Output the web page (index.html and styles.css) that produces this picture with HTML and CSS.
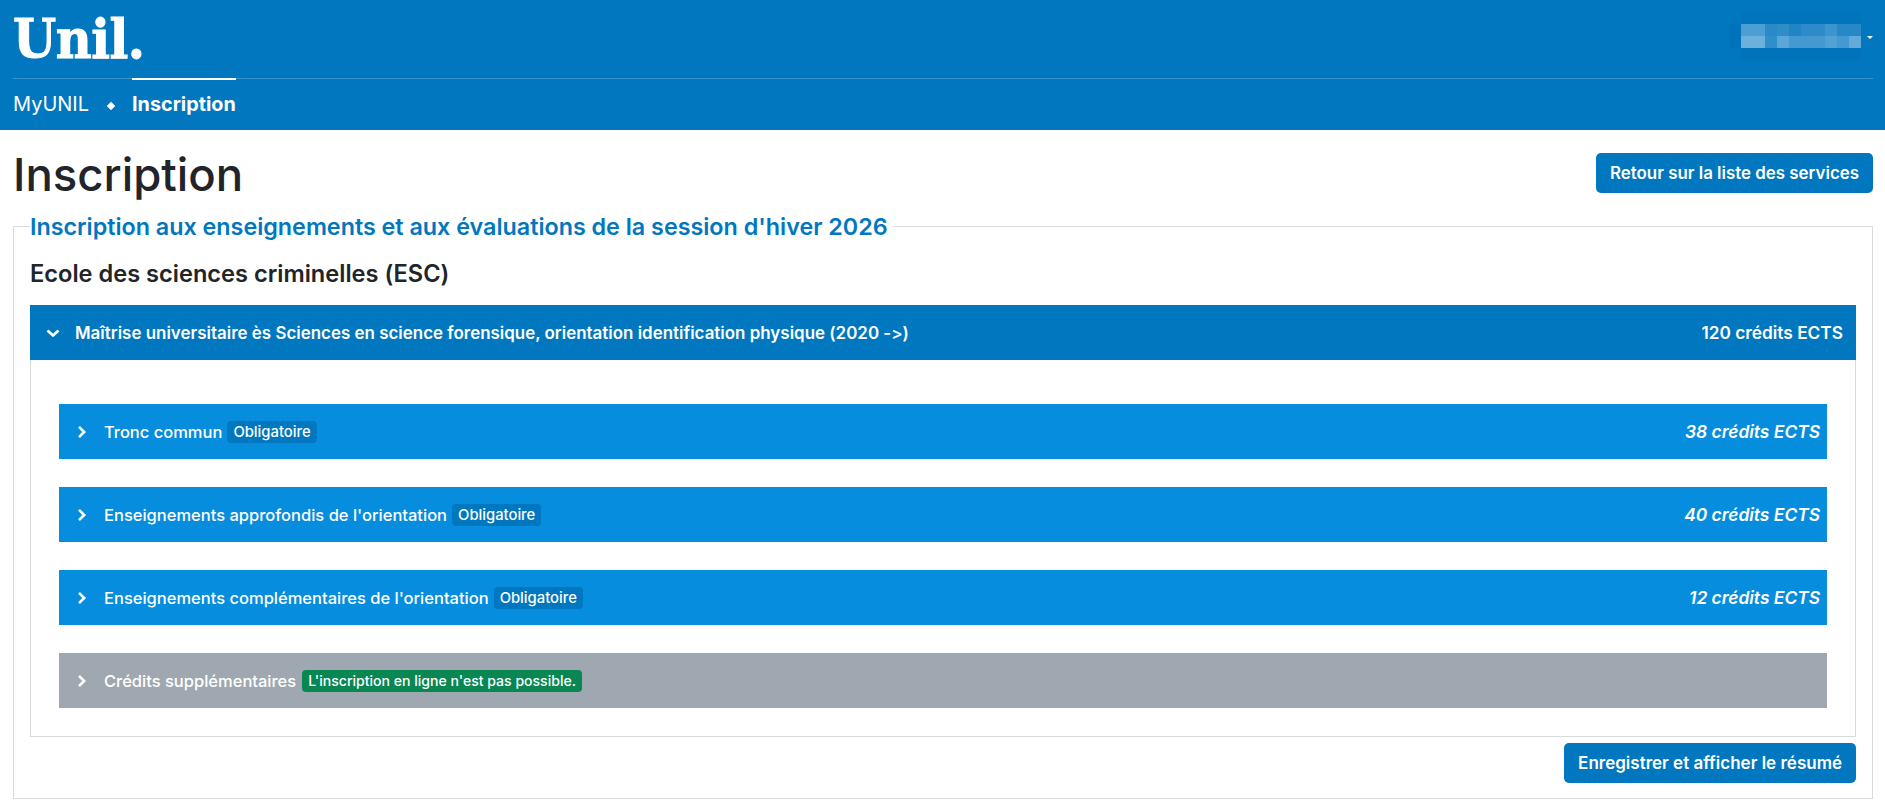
FILE: index.html
```html
<!DOCTYPE html>
<html lang="fr">
<head>
<meta charset="utf-8">
<title>Inscription</title>
<link rel="stylesheet" href="styles.css">
</head>
<body>
<header class="site-header">
  <div class="brand-row">
    <div class="logo">Unil.</div>
    <div class="user">
      <svg class="user-blur" width="132" height="48" viewBox="-1 0 11 4" shape-rendering="crispEdges">
        <rect x="0" y="0" width="10" height="1" fill="#0075bc"/>
        <rect x="-1" y="1" width="1" height="2" fill="#0073bb"/>
        <rect x="0" y="1" width="2" height="1" fill="#4c9fd2"/><rect x="2" y="1" width="1" height="1" fill="#2a8ac7"/><rect x="3" y="1" width="1" height="1" fill="#2f8dc8"/><rect x="4" y="1" width="1" height="1" fill="#1f85c4"/><rect x="5" y="1" width="2" height="1" fill="#2c8bc8"/><rect x="7" y="1" width="1" height="1" fill="#3c95cd"/><rect x="8" y="1" width="2" height="1" fill="#2688c6"/>
        <rect x="0" y="2" width="2" height="1" fill="#6cb0dc"/><rect x="2" y="2" width="1" height="1" fill="#2f8fca"/><rect x="3" y="2" width="1" height="1" fill="#5ca7d7"/><rect x="4" y="2" width="3" height="1" fill="#449ad0"/><rect x="7" y="2" width="1" height="1" fill="#50a2d5"/><rect x="8" y="2" width="1" height="1" fill="#449ad0"/><rect x="9" y="2" width="1" height="1" fill="#62abd9"/>
        <rect x="0" y="3" width="10" height="1" fill="#0073ba"/>
      </svg>
      <span class="caret"></span>
    </div>
  </div>
  <nav class="crumbs">
    <a class="crumb">MyUNIL</a>
    <span class="crumb-sep"></span>
    <a class="crumb crumb-active">Inscription</a>
  </nav>
</header>
<main class="page">
  <div class="title-row">
    <h1 class="page-title">Inscription</h1>
    <a class="btn btn-back">Retour sur la liste des services</a>
  </div>
  <fieldset class="session">
    <legend class="session-legend">Inscription aux enseignements et aux évaluations de la session d'hiver 2026</legend>
    <h2 class="school">Ecole des sciences criminelles (ESC)</h2>
    <section class="program">
      <div class="program-head">
        <svg class="chev" width="14" height="14" viewBox="0 0 14 14"><path d="M1.5 4.5L7 9.5l5.5-5" fill="none" stroke="#fff" stroke-width="2.6"/></svg>
        <span class="program-name">Maîtrise universitaire ès Sciences en science forensique, orientation identification physique (2020 -&gt;)</span>
        <span class="program-credits">120 crédits ECTS</span>
      </div>
      <div class="modules">
        <div class="module">
          <svg class="chev" width="14" height="14" viewBox="0 0 14 14"><path d="M4 1.8L9.2 7 4 12.2" fill="none" stroke="#fff" stroke-width="2.6"/></svg>
          <span class="module-name">Tronc commun</span><span class="badge">Obligatoire</span>
          <span class="module-credits">38 crédits ECTS</span>
        </div>
        <div class="module">
          <svg class="chev" width="14" height="14" viewBox="0 0 14 14"><path d="M4 1.8L9.2 7 4 12.2" fill="none" stroke="#fff" stroke-width="2.6"/></svg>
          <span class="module-name">Enseignements approfondis de l'orientation</span><span class="badge">Obligatoire</span>
          <span class="module-credits">40 crédits ECTS</span>
        </div>
        <div class="module">
          <svg class="chev" width="14" height="14" viewBox="0 0 14 14"><path d="M4 1.8L9.2 7 4 12.2" fill="none" stroke="#fff" stroke-width="2.6"/></svg>
          <span class="module-name">Enseignements complémentaires de l'orientation</span><span class="badge">Obligatoire</span>
          <span class="module-credits">12 crédits ECTS</span>
        </div>
        <div class="module module-off">
          <svg class="chev" width="14" height="14" viewBox="0 0 14 14"><path d="M4 1.8L9.2 7 4 12.2" fill="none" stroke="#fff" stroke-width="2.6"/></svg>
          <span class="module-name">Crédits supplémentaires</span><span class="badge badge-ok">L'inscription en ligne n'est pas possible.</span>
        </div>
      </div>
    </section>
    <div class="actions"><a class="btn btn-save">Enregistrer et afficher le résumé</a></div>
  </fieldset>
</main>
</body>
</html>
```
FILE: styles.css
```css
* { box-sizing: border-box; }
html, body { margin: 0; padding: 0; background: #fff; }
body { font-family: "Inter", "Liberation Sans", sans-serif; font-variant-ligatures: none; font-feature-settings: "calt" 0; color: #212529; height: 805px; overflow: hidden; }

.site-header { background: #0077be; height: 130px; padding: 0 12px 0 13px; color: #fff; }
.brand-row { height: 79px; border-bottom: 1px solid #3a94cd; display: flex; justify-content: space-between; }
.logo { font-family: "DejaVu Serif", serif; font-stretch: condensed; font-weight: 700; font-size: 55px; line-height: 78px; letter-spacing: -0.5px; -webkit-text-stroke: 1px #fff; }
.user { display: flex; align-items: flex-start; padding-top: 12px; }
.user-blur { display: block; margin-right: 6px; }
.caret { width: 0; height: 0; margin-top: 24px; border: 3px solid transparent; border-top-color: #fff; border-bottom: 0; }

.crumbs { display: flex; align-items: flex-start; font-size: 20px; line-height: 24px; }
.crumb { padding-top: 13px; display: block; }
.crumb-sep { width: 6px; height: 6px; background: #fff; transform: rotate(45deg); margin: 24px 18px 0 19px; }
.crumb-active { font-size: 19.8px; font-weight: 700; border-top: 2px solid #fff; margin-top: -1px; padding-top: 12px; }

.page { padding: 0 12px 0 13px; }
.title-row { display: flex; justify-content: space-between; align-items: flex-start; height: 82px; padding-top: 23px; }
.page-title { margin: 0; font-size: 45.5px; line-height: 44px; font-weight: 500; }
.btn { display: block; background: #0077be; color: #fff; font-weight: 600; line-height: 20px; padding: 10px 14px; border-radius: 5px; }
.btn-back { font-size: 16.9px; }
.btn-save { font-size: 17px; }

.session { margin: 0; padding: 0 16px; border: 1px solid #d9dadb; height: 587px; min-width: 0; }
.session-legend { margin: 0; padding: 2px 6px 0 0; color: #0077be; font-size: 23.3px; line-height: 26px; font-weight: 600; }
.school { margin: 0; padding-top: 20px; font-size: 23.6px; line-height: 28px; font-weight: 600; }
.program { margin-top: 17px; border: 1px solid #d9dadb; border-top: 0; height: 432px; }
.program-head { margin: 0 -1px; height: 55px; background: #0077be; color: #fff; display: flex; align-items: center; padding: 0 13px 0 16px; font-size: 16.95px; font-weight: 600; }
.program-name { margin-left: 15px; flex: 1; }
.program-credits { font-size: 17.3px; }
.modules { padding: 44px 28px 0; display: flex; flex-direction: column; gap: 28px; }
.module { height: 55px; background: #068ddd; color: #fff; display: flex; align-items: center; padding: 0 7px 0 16px; font-size: 16.5px; font-weight: 500; }
.module-off { background: #9fa8b0; }
.module-name { margin-left: 15px; }
.chev { flex: none; }
.badge { margin-left: 5px; background: #0077be; font-size: 14.8px; line-height: 22px; padding: 0 6px; border-radius: 4px; font-weight: 500; }
.badge-ok { margin-left: 6px; background: #088753; font-size: 14.05px; }
.module-credits { margin-left: auto; font-style: italic; font-weight: 600; font-size: 17.4px; }
.actions { display: flex; justify-content: flex-end; margin-top: 6px; }
```
